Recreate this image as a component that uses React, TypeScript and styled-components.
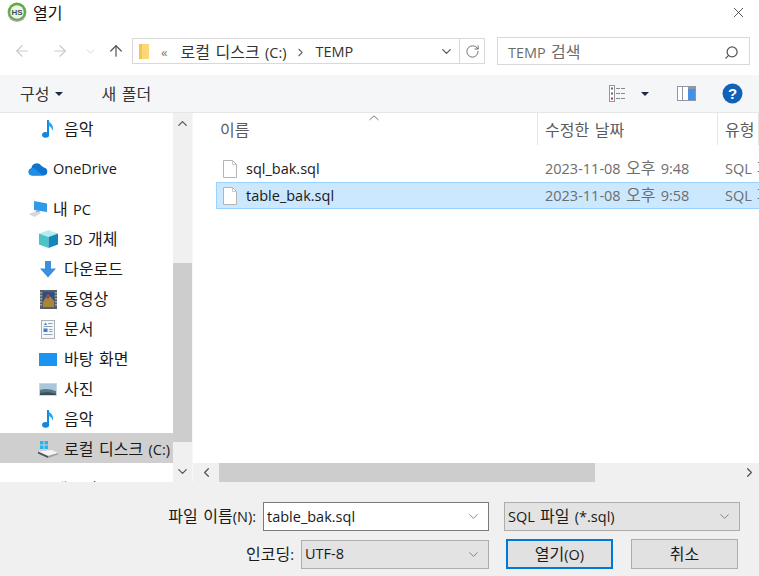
import React from 'react';
import styled, { createGlobalStyle } from 'styled-components';
import { ArrowLeft, ArrowRight, ArrowUp, ChevronDown, ChevronLeft, ChevronRight, ChevronUp, RotateCw, Search, X } from 'lucide-react';

const GlobalStyle = createGlobalStyle`
    html, body {
        margin: 0;
        padding: 0;
        background: #fff;
    }
    * {
        box-sizing: border-box;
    }
`;

// #region Styles

const Dialog = styled.div`
    width: 759px;
    height: 576px;
    overflow: hidden;
    display: flex;
    flex-direction: column;
    background: #fff;
    color: #1a1a1a;
    font-family: 'Open Sans', 'Noto Sans CJK KR', sans-serif;
    font-size: 14.5px;
    line-height: 20px;
    word-spacing: 1.5px;
`;

// Hangul runs wider here than the Latin next to it
const Ko = styled.span`
    font-size: 16px;
    font-weight: 400;
    line-height: 20px;
`;

const TitleBar = styled.div`
    height: 24px;
    display: flex;
    align-items: center;
    padding: 0 12px 0 7px;
    gap: 6px;
    flex: none;
`;

const TitleText = styled.div`
    flex: 1;
    color: #111;
    padding-top: 2px;
`;

const NavBar = styled.div`
    height: 51px;
    flex: none;
    display: flex;
    align-items: center;
    padding: 3px 9px 0 0;
`;

const NavButton = styled.div<{ $width: number; $color?: string }>`
    width: ${(p) => p.$width}px;
    display: flex;
    justify-content: center;
    color: ${(p) => p.$color || '#c9c9c9'};
`;

const AddressBox = styled.div`
    width: 353px;
    height: 26px;
    margin-left: 3px;
    border: 1px solid #d9d9d9;
    display: flex;
    align-items: center;
    padding-left: 5px;
    color: #333;
`;

const Crumbs = styled.div`
    flex: 1;
    display: flex;
    align-items: center;
    gap: 8px;
    margin-left: 11px;
    padding-top: 2px;
    white-space: nowrap;
`;

const CrumbMore = styled.span`
    font-size: 13px;
    color: #777;
    margin-right: 5px;
`;

const AddressDrop = styled.div`
    width: 26px;
    display: flex;
    justify-content: center;
    color: #555;
`;

const RefreshBox = styled.div`
    width: 25px;
    height: 100%;
    border-left: 1px solid #d9d9d9;
    display: flex;
    align-items: center;
    justify-content: center;
    color: #666;
`;

const SearchBox = styled.div`
    width: 253px;
    height: 28px;
    margin-left: 12px;
    border: 1px solid #d9d9d9;
    display: flex;
    align-items: center;
    justify-content: space-between;
    padding: 2px 10px 0;
    color: #6d6d6d;
    svg {
        transform: scaleX(-1);
        color: #555;
    }
`;

const Toolbar = styled.div`
    height: 38px;
    flex: none;
    background: #f5f6f7;
    border-bottom: 1px solid #e6e6e6;
    display: flex;
    align-items: center;
    padding: 0 16px 0 20px;
    color: #333;
`;

const ToolItem = styled.div<{ $gap?: number; $left?: number }>`
    display: flex;
    align-items: center;
    gap: ${(p) => p.$gap || 0}px;
    margin-left: ${(p) => p.$left || 0}px;
`;

const Caret = styled.i`
    width: 0;
    height: 0;
    border-left: 4px solid transparent;
    border-right: 4px solid transparent;
    border-top: 4px solid #1f2a44;
`;

const Spacer = styled.div`
    flex: 1;
`;

const Main = styled.div`
    flex: 1;
    min-height: 0;
    display: flex;
`;

const Sidebar = styled.div`
    width: 173px;
    flex: none;
    overflow: hidden;
`;

const TreeRow = styled.div<{ $level?: number; $selected?: boolean; $top?: number }>`
    height: 30px;
    display: flex;
    align-items: center;
    margin-top: ${(p) => p.$top || 0}px;
    padding: 2px 0 0 ${(p) => (p.$level === 0 ? 28 : 38)}px;
    gap: ${(p) => (p.$level === 0 ? 5 : 6)}px;
    background: ${(p) => (p.$selected ? '#cfcfcf' : 'transparent')};
    color: #1a1a1a;
    white-space: nowrap;
`;

const TreeIcon = styled.div`
    width: 20px;
    flex: none;
    display: flex;
    justify-content: center;
`;

const VScroll = styled.div`
    width: 20px;
    flex: none;
    background: #f0f0f0;
    display: flex;
    flex-direction: column;
    align-items: stretch;
    color: #555;
    border-right: 1px solid #f7f7f7;
`;

const ScrollArrow = styled.div<{ $height: number }>`
    height: ${(p) => p.$height}px;
    flex: none;
    display: flex;
    align-items: center;
    justify-content: center;
`;

const VTrack = styled.div`
    height: 129px;
    flex: none;
`;

const VThumb = styled.div`
    height: 179px;
    flex: none;
    background: #cdcdcd;
`;

const FilePane = styled.div`
    flex: 1;
    min-width: 0;
    display: flex;
    flex-direction: column;
`;

const FileList = styled.div`
    flex: 1;
    min-height: 0;
    position: relative;
    overflow: hidden;
`;

const HeaderRow = styled.div`
    height: 32px;
    display: grid;
    grid-template-columns: 345px 180px 1fr;
`;

const HeaderCell = styled.div<{ $left: number }>`
    padding: 2px 0 0 ${(p) => p.$left}px;
    display: flex;
    align-items: center;
    border-right: 1px solid #e5e5e5;
    color: #5b5b5b;
    white-space: nowrap;
`;

const SortArrow = styled.svg`
    position: absolute;
    left: 176px;
    top: 2px;
`;

const Rows = styled.div`
    padding: 10px 0 0 23px;
`;

const FileRow = styled.div<{ $selected?: boolean }>`
    height: 27px;
    display: grid;
    grid-template-columns: 322px 180px 1fr;
    align-items: center;
    white-space: nowrap;
    background: ${(p) => (p.$selected ? '#cce8ff' : 'transparent')};
    border: 1px solid ${(p) => (p.$selected ? '#99d1ff' : 'transparent')};
    border-right: 0;
`;

const FileName = styled.div`
    display: flex;
    align-items: center;
    gap: 9px;
    padding-left: 6px;
    color: #1a1a1a;
`;

const FileMeta = styled.div`
    color: #6d6d6d;
    overflow: hidden;
    padding-left: 6px;
`;

const HScroll = styled.div`
    height: 19px;
    flex: none;
    background: #f0f0f0;
    display: flex;
    align-items: stretch;
    color: #555;
`;

const HArrow = styled.div<{ $width: number }>`
    width: ${(p) => p.$width}px;
    flex: none;
    display: flex;
    align-items: center;
    justify-content: center;
`;

const HThumb = styled.div`
    width: 376px;
    flex: none;
    background: #cdcdcd;
`;

const Footer = styled.div`
    height: 94px;
    flex: none;
    background: #f0f0f0;
    padding: 20px 19px 0 0;
    display: flex;
    flex-direction: column;
    gap: 8px;
`;

const FooterRow = styled.div`
    display: flex;
    align-items: center;
    justify-content: flex-end;
`;

const Label = styled.label`
    margin-right: 7px;
    white-space: nowrap;
    color: #1a1a1a;
`;

const Field = styled.div<{ $width: number; $light?: boolean; $after?: number }>`
    width: ${(p) => p.$width}px;
    height: 29px;
    margin-right: ${(p) => p.$after || 0}px;
    background: ${(p) => (p.$light ? '#fff' : '#e3e3e3')};
    border: 1px solid ${(p) => (p.$light ? '#7a7a7a' : '#adadad')};
    display: flex;
    align-items: center;
    justify-content: space-between;
    padding: 0 7px 0 3px;
    color: #1a1a1a;
    svg {
        color: #666;
    }
`;

const Button = styled.div<{ $primary?: boolean; $after?: number }>`
    width: 107px;
    height: 30px;
    margin-right: ${(p) => p.$after || 0}px;
    background: #e1e1e1;
    border: ${(p) => (p.$primary ? '2px solid #0078d7' : '1px solid #adadad')};
    display: flex;
    align-items: center;
    justify-content: center;
    color: #1a1a1a;
`;

// #endregion

const HsLogo = () => (
    <svg width="20" height="20" viewBox="0 0 20 20">
        <circle cx="10" cy="10.500" r="9.500" fill="#a9a9a9" />
        <circle cx="10" cy="9.500" r="9" fill="#5fae3c" />
        <circle cx="10" cy="10" r="6.800" fill="#eef1f0" />
        <text x="10" y="12.800" textAnchor="middle" fontSize="8" fontWeight="700" fill="#3a5550" fontFamily="Liberation Sans, sans-serif">HS</text>
    </svg>
);

const Folder = () => (
    <svg width="12" height="17" viewBox="0 0 12 17">
        <rect x="1" y="1" width="10" height="15" fill="#fbd777" />
        <rect x="1" y="1" width="3" height="15" fill="#f3c552" />
    </svg>
);

const ViewIcon = () => (
    <svg width="18" height="17" viewBox="0 0 18 17" fill="none">
        <rect x="0.500" y="0.500" width="5" height="16" fill="#fff" stroke="#8f98a3" />
        <rect x="2" y="2.500" width="2" height="2" fill="#667" />
        <rect x="2" y="7.500" width="2" height="2" fill="#667" />
        <rect x="2" y="12.500" width="2" height="2" fill="#c22a55" />
        <path d="M7 3.500h10M7 8.500h10M7 13.500h10" stroke="#8a8a8a" strokeDasharray="4 1" />
    </svg>
);

const PreviewIcon = () => (
    <svg width="19" height="15" viewBox="0 0 19 15">
        <rect x="0.500" y="0.500" width="18" height="14" fill="#fff" stroke="#8d99a8" />
        <rect x="11" y="1" width="7" height="13" fill="#4a90e2" />
        <rect x="11" y="1" width="7" height="2" fill="#8d99a8" />
        <rect x="5" y="1" width="1" height="13" fill="#8d99a8" />
    </svg>
);

const HelpIcon = () => (
    <svg width="21" height="21" viewBox="0 0 21 21">
        <circle cx="10.500" cy="10.500" r="10" fill="#0f62b8" />
        <text x="10.500" y="16" textAnchor="middle" fontSize="15" fontWeight="700" fill="#fff" fontFamily="Liberation Sans, sans-serif">?</text>
    </svg>
);

const Music = () => (
    <svg width="19" height="20" viewBox="0 0 19 20">
        <path d="M9 1v14.200" stroke="#1488e0" strokeWidth="2" fill="none" />
        <ellipse cx="6.600" cy="15.800" rx="3.600" ry="2.900" fill="#1488e0" />
        <path d="M9.500 1c.5 3 4.500 3.500 4.500 8 0 1-.3 2-.8 2.800.2-2.800-2-4.300-3.700-5z" fill="#27a4f0" />
    </svg>
);

const Cloud = () => (
    <svg width="20" height="14" viewBox="0 0 20 14">
        <path d="M4 13.500a3.700 3.700 0 0 1-.6-7.300A5.500 5.500 0 0 1 13.600 4a4.800 4.800 0 0 1 2.200 1.600A4 4 0 0 1 16 13.500z" fill="#0f73d0" />
        <path d="M4 13.500a3.500 3.500 0 0 1-1-6.800c2-1 4-.2 5.500 1.300L15 13.500z" fill="#1f8fe6" />
    </svg>
);

const Pc = () => (
    <svg width="20" height="18" viewBox="0 0 20 18">
        <path d="M6 1l13 2.500v8.500L6 10z" fill="#2f9ae8" />
        <path d="M8 10.500l4 .6-1 1.400-3-.4z" fill="#7fa6c4" />
        <path d="M0.500 14l7-2.500 6 1.200-7 4.300z" fill="#d5d9de" />
    </svg>
);

const Cube = () => (
    <svg width="19" height="18" viewBox="0 0 19 18">
        <path d="M9.500 0L19 3.500 9.500 7 0 3.500z" fill="#b5ecec" />
        <path d="M0 3.500L9.500 7v11L0 14.500z" fill="#4ac3c9" />
        <path d="M19 3.500L9.500 7v11L19 14.500z" fill="#1487b8" />
    </svg>
);

const Download = () => (
    <svg width="16" height="17" viewBox="0 0 16 17">
        <path d="M5 0h6v7.500h5L8 16.500 0 7.500h5z" fill="#3d8fe0" />
    </svg>
);

const Film = () => (
    <svg width="17" height="19" viewBox="0 0 17 19">
        <rect width="17" height="19" fill="#55606b" />
        <path d="M1 2v15M16 2v15" stroke="#dfe5ea" strokeDasharray="1.500 1.500" />
        <rect x="3" y="2" width="11" height="15" fill="#2b4f87" />
        <path d="M3 12l3-5 2 2 2-3 4 5v6H3z" fill="#a8863c" />
        <circle cx="8" cy="6" r="1.800" fill="#b8404a" />
    </svg>
);

const Doc = () => (
    <svg width="14" height="19" viewBox="0 0 14 19" fill="none">
        <rect x="0.500" y="0.500" width="13" height="18" fill="#f4f6f8" stroke="#aab3bd" />
        <path d="M7 3.500h4.500M2.500 6.500h9M8 9.500h3.500M8 11.500h3.500M2.500 14.500h9" stroke="#8ea2b8" />
        <path d="M3 5l1.500-2.500L6 5z" fill="#3f7fbf" />
        <rect x="2.500" y="8.500" width="4" height="3.500" fill="#3f7fbf" />
    </svg>
);

const Desktop = () => (
    <svg width="18" height="13" viewBox="0 0 18 13">
        <rect width="18" height="13" fill="#1a94f0" />
    </svg>
);

const Photo = () => (
    <svg width="18" height="13" viewBox="0 0 18 13">
        <rect width="18" height="13" fill="#c9d6df" />
        <rect x="1" y="1" width="16" height="6" fill="#a9c6da" />
        <path d="M1 7c5-2 10-1 16 1v4H1z" fill="#5a7680" />
        <path d="M1 10c5-1 10-1 16 1v1H1z" fill="#34505a" />
    </svg>
);

const Drive = () => (
    <svg width="20" height="18" viewBox="0 0 20 18">
        <path d="M2 1h3.500v3.500H2zM6.500 1H10v3.500H6.500zM2 5.500h3.500V9H2zM6.500 5.500H10V9H6.500z" fill="#27b4ee" />
        <path d="M0 11.500L14 10l6 3-10 3z" fill="#f2f3f4" />
        <path d="M0 11.500L10 16v2L0 13.500z" fill="#4c5258" />
        <path d="M10 16l10-3v1.500L10 18z" fill="#9aa0a6" />
    </svg>
);

const Network = () => (
    <svg width="18" height="16" viewBox="0 0 18 16">
        <rect x="4" y="1" width="10" height="8" fill="#6fa8d8" />
        <rect x="2" y="11" width="14" height="3" fill="#8a96a3" />
    </svg>
);

const FileIcon = () => (
    <svg width="14" height="18" viewBox="0 0 14 18" fill="none">
        <path d="M0.500 0.500h9l4 4v13h-13z" fill="#fff" stroke="#b4b4b4" />
        <path d="M9.500 0.500v4h4" stroke="#c9c9c9" />
    </svg>
);

const treeItems = [
    { icon: <Music />, label: <Ko>음악</Ko> },
    { icon: <Cloud />, label: 'OneDrive', level: 0, top: 10 },
    { icon: <Pc />, label: <><Ko>내</Ko> PC</>, level: 0, top: 10 },
    { icon: <Cube />, label: <>3D <Ko>개체</Ko></> },
    { icon: <Download />, label: <Ko>다운로드</Ko> },
    { icon: <Film />, label: <Ko>동영상</Ko> },
    { icon: <Doc />, label: <Ko>문서</Ko> },
    { icon: <Desktop />, label: <Ko>바탕 화면</Ko> },
    { icon: <Photo />, label: <Ko>사진</Ko> },
    { icon: <Music />, label: <Ko>음악</Ko> },
    { icon: <Drive />, label: <><Ko>로컬 디스크</Ko> (C:)</>, selected: true },
    { icon: <Network />, label: <Ko>네트워크</Ko>, level: 0, top: 10 },
];

const files = [
    { name: 'sql_bak.sql', time: '9:48' },
    { name: 'table_bak.sql', time: '9:58', selected: true },
];

export default function App() {
    return (
        <Dialog>
            <GlobalStyle />
            <TitleBar>
                <HsLogo />
                <TitleText><Ko>열기</Ko></TitleText>
                <X size={17} strokeWidth={1} color="#111" />
            </TitleBar>
            <NavBar>
                <NavButton $width={43}><ArrowLeft size={18} strokeWidth={1.5} /></NavButton>
                <NavButton $width={34}><ArrowRight size={18} strokeWidth={1.5} /></NavButton>
                <NavButton $width={26}><ChevronDown size={13} strokeWidth={1.5} /></NavButton>
                <NavButton $width={26} $color="#555"><ArrowUp size={18} strokeWidth={1.6} /></NavButton>
                <AddressBox>
                    <Folder />
                    <Crumbs>
                        <CrumbMore>«</CrumbMore>
                        <span><Ko>로컬 디스크</Ko> (C:)</span>
                        <ChevronRight size={13} color="#666" />
                        <span>TEMP</span>
                    </Crumbs>
                    <AddressDrop><ChevronDown size={15} /></AddressDrop>
                    <RefreshBox><RotateCw size={15} strokeWidth={1.5} /></RefreshBox>
                </AddressBox>
                <SearchBox>
                    <span>TEMP <Ko>검색</Ko></span>
                    <Search size={15} strokeWidth={2} />
                </SearchBox>
            </NavBar>
            <Toolbar>
                <ToolItem $gap={6}><Ko>구성</Ko><Caret /></ToolItem>
                <ToolItem $left={38}><Ko>새 폴더</Ko></ToolItem>
                <Spacer />
                <ToolItem $gap={14}><ViewIcon /><Caret /></ToolItem>
                <ToolItem $left={28}><PreviewIcon /></ToolItem>
                <ToolItem $left={26}><HelpIcon /></ToolItem>
            </Toolbar>
            <Main>
                <Sidebar>
                    {treeItems.map((item, index) => (
                        <TreeRow key={index} $level={item.level} $selected={item.selected} $top={item.top}>
                            <TreeIcon>{item.icon}</TreeIcon>
                            <span>{item.label}</span>
                        </TreeRow>
                    ))}
                </Sidebar>
                <VScroll>
                    <ScrollArrow $height={21}><ChevronUp size={15} strokeWidth={2} /></ScrollArrow>
                    <VTrack />
                    <VThumb />
                    <Spacer />
                    <ScrollArrow $height={21}><ChevronDown size={15} strokeWidth={2} /></ScrollArrow>
                </VScroll>
                <FilePane>
                    <FileList>
                        <SortArrow width="10" height="6" viewBox="0 0 10 6" fill="none">
                            <path d="M0.500 5L5 0.800 9.500 5" stroke="#777" />
                        </SortArrow>
                        <HeaderRow>
                            <HeaderCell $left={27}><Ko>이름</Ko></HeaderCell>
                            <HeaderCell $left={7}><Ko>수정한 날짜</Ko></HeaderCell>
                            <HeaderCell $left={7}><Ko>유형</Ko></HeaderCell>
                        </HeaderRow>
                        <Rows>
                            {files.map((file) => (
                                <FileRow key={file.name} $selected={file.selected}>
                                    <FileName><FileIcon />{file.name}</FileName>
                                    <FileMeta>2023-11-08 <Ko>오후</Ko> {file.time}</FileMeta>
                                    <FileMeta>SQL <Ko>파일</Ko></FileMeta>
                                </FileRow>
                            ))}
                        </Rows>
                    </FileList>
                    <HScroll>
                        <HArrow $width={26}><ChevronLeft size={15} strokeWidth={2} /></HArrow>
                        <HThumb />
                        <Spacer />
                        <HArrow $width={20}><ChevronRight size={15} strokeWidth={2} /></HArrow>
                    </HScroll>
                </FilePane>
            </Main>
            <Footer>
                <FooterRow>
                    <Label><Ko>파일 이름</Ko>(N):</Label>
                    <Field $width={226} $light $after={15}>
                        <span>table_bak.sql</span>
                        <ChevronDown size={15} strokeWidth={1.2} />
                    </Field>
                    <Field $width={236}>
                        <span>SQL <Ko>파일</Ko> (*.sql)</span>
                        <ChevronDown size={15} strokeWidth={1.2} />
                    </Field>
                </FooterRow>
                <FooterRow>
                    <Label><Ko>인코딩</Ko>:</Label>
                    <Field $width={188} $after={17}>
                        <span>UTF-8</span>
                        <ChevronDown size={15} strokeWidth={1.2} />
                    </Field>
                    <Button $primary $after={18}><span><Ko>열기</Ko>(O)</span></Button>
                    <Button $after={2}><Ko>취소</Ko></Button>
                </FooterRow>
            </Footer>
        </Dialog>
    );
}
